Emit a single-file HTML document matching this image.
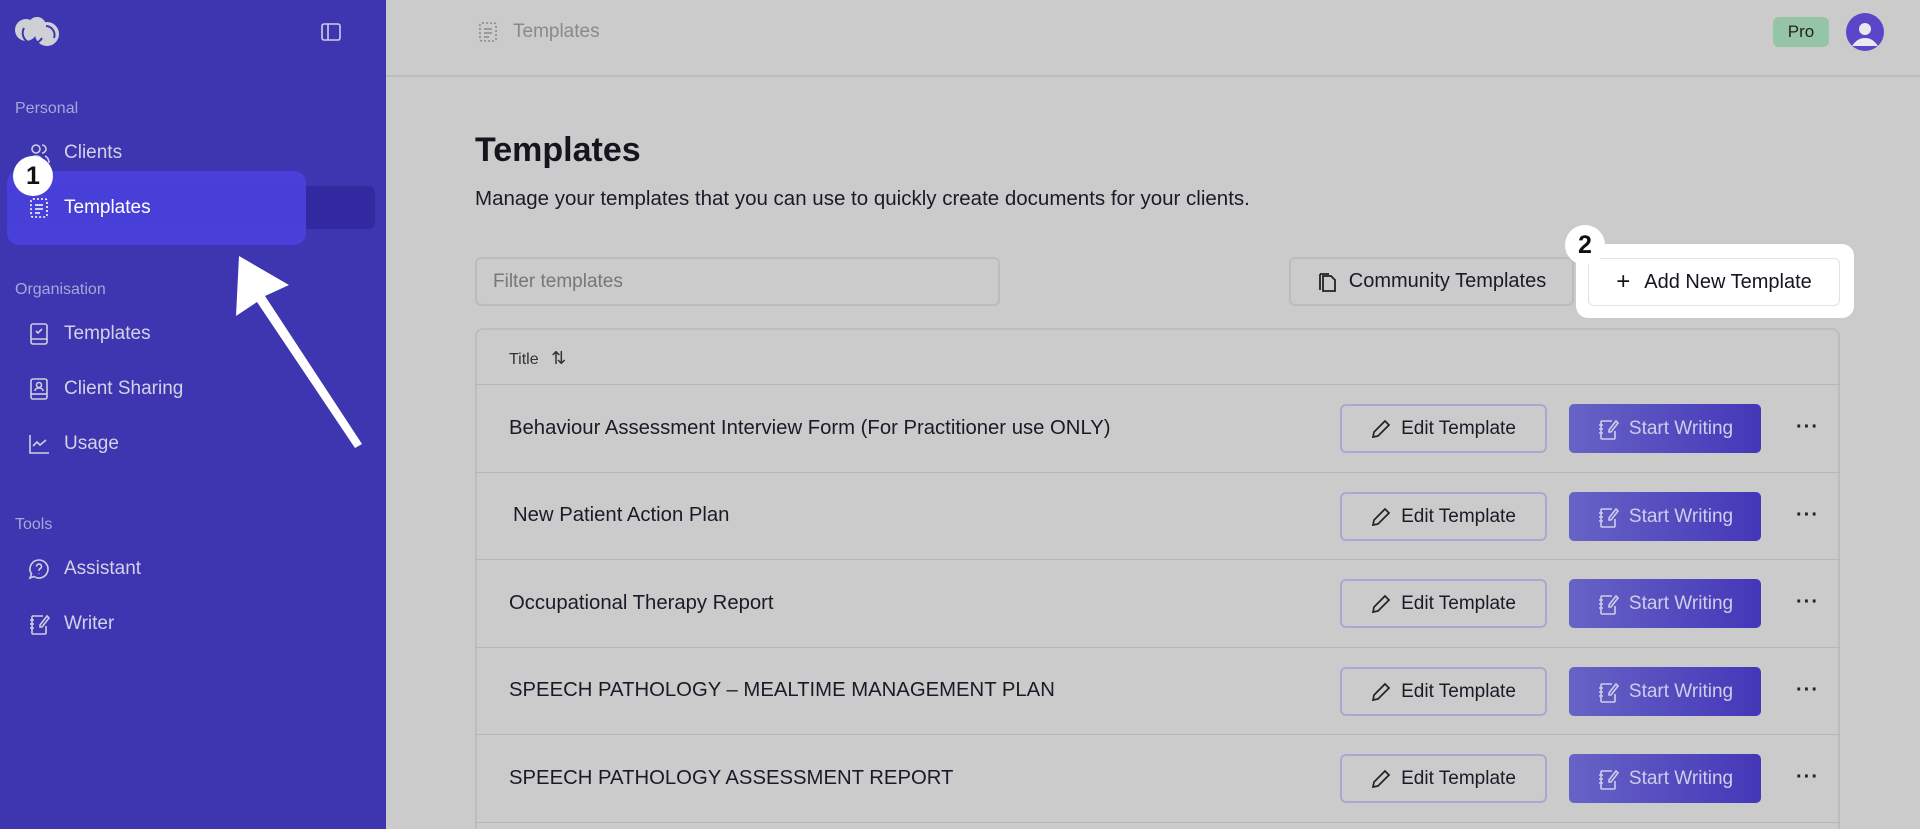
<!DOCTYPE html>
<html style="overflow:hidden;height:829px"><head><meta charset="utf-8"><style>
*{margin:0;padding:0;box-sizing:border-box}
body{width:1920px;height:829px;overflow:hidden;background:#cbcbcb;font-family:"Liberation Sans",sans-serif;position:relative}
#wrap{position:absolute;left:0;top:0;width:1920px;height:829px;overflow:hidden}
.a{position:absolute}
#sb{left:0;top:0;width:386px;height:829px;background:#3d36b0}
.sec{color:#a9a6d8;font-size:16px;left:15px}
.it{left:64px;color:#d3d2e8;font-size:19px}
.ic{left:28px;width:22px;height:22px}
.row{left:475px;width:1365px;border-top:1px solid #b5b5c0}
.rt{left:509px;font-size:20.3px;color:#1b1b28}
.eb{left:1340px;width:207px;height:49px;border:2px solid #a9a8d2;border-radius:6px;background:#cbcbcb;font-size:19px;color:#1b1b28;display:flex;align-items:center;justify-content:center;gap:10px}
.sw{left:1569px;width:192px;height:49px;border-radius:5px;background:linear-gradient(90deg,#6763c6,#4437b8);font-size:19px;color:#cfcdea;display:flex;align-items:center;justify-content:center;gap:10px}
.dt{left:1796px;font-size:20px;color:#222;letter-spacing:1px;font-weight:bold}
.bd{width:40px;height:40px;border-radius:50%;background:#fff;font-weight:bold;font-size:25px;color:#111;display:flex;align-items:center;justify-content:center}
</style></head><body><div id="wrap">
<div id="sb" class="a"></div>
<svg class="a" style="left:14px;top:16px" width="46" height="32" viewBox="0 0 46 32"><circle cx="12" cy="14" r="11" fill="#cfcfd6"/><circle cx="23" cy="10" r="9" fill="#cfcfd6"/><circle cx="33" cy="18" r="12" fill="#cfcfd6"/><path d="M10 12a10 10 0 0 0 18 10" stroke="#3d36b0" stroke-width="2" fill="none"/><path d="M32 10a9 9 0 0 1 8 12" stroke="#3d36b0" stroke-width="2" fill="none"/></svg>
<svg class="a" style="left:321px;top:23px" width="20" height="18" viewBox="0 0 20 18"><rect x="1" y="1" width="18" height="16" rx="2" fill="none" stroke="#cfcfe0" stroke-width="1.6"/><line x1="7" y1="1" x2="7" y2="17" stroke="#cfcfe0" stroke-width="1.6"/></svg>
<div class="a sec" style="top:100px">Personal</div>
<svg class="a ic" style="top:143px" viewBox="0 0 22 22" fill="none" stroke="#cfcfe0" stroke-width="1.6"><circle cx="8" cy="6" r="4"/><path d="M1 20c0-4 3-7 7-7s7 3 7 7"/><path d="M14 2a4 4 0 0 1 0 8M17 13c2 1 4 3 4 7"/></svg>
<div class="a it" style="top:142px">Clients</div>
<div class="a" style="left:7px;top:186px;width:368px;height:43px;background:#3229a0;border-radius:6px"></div>
<div class="a" style="left:7px;top:171px;width:299px;height:74px;background:#4a40dc;border-radius:12px;opacity:.95"></div>
<svg class="a ic" style="top:197px" viewBox="0 0 22 22" fill="none" stroke="#fff" stroke-width="1.6" stroke-dasharray="2 2"><rect x="3" y="2" width="16" height="18" rx="2"/><path d="M7 8h8M7 12h8M7 16h5" stroke-dasharray="none"/></svg>
<div class="a it" style="top:197px;color:#fff">Templates</div>
<div class="a bd" style="left:13px;top:156px">1</div>
<div class="a sec" style="top:281px">Organisation</div>
<svg class="a ic" style="top:323px" viewBox="0 0 22 22" fill="none" stroke="#cfcfe0" stroke-width="1.6"><rect x="3" y="1" width="16" height="20" rx="2"/><path d="M3 16h16M8 8l2 2 4-4"/></svg>
<div class="a it" style="top:323px">Templates</div>
<svg class="a ic" style="top:378px" viewBox="0 0 22 22" fill="none" stroke="#cfcfe0" stroke-width="1.6"><rect x="3" y="1" width="16" height="20" rx="2"/><path d="M3 16h16"/><circle cx="11" cy="7" r="2.5"/><path d="M7 13c0-2 2-3 4-3s4 1 4 3"/></svg>
<div class="a it" style="top:378px">Client Sharing</div>
<svg class="a ic" style="top:433px" viewBox="0 0 22 22" fill="none" stroke="#cfcfe0" stroke-width="1.6"><path d="M2 2v18h19M5 13l4-4 3 3 6-5"/></svg>
<div class="a it" style="top:433px">Usage</div>
<div class="a sec" style="top:516px">Tools</div>
<svg class="a ic" style="top:558px" viewBox="0 0 22 22" fill="none" stroke="#cfcfe0" stroke-width="1.6"><path d="M11 2a9 9 0 1 1-5 16.5L2 20l1.5-4A9 9 0 0 1 11 2z"/><path d="M8.5 8.5a2.5 2.5 0 1 1 3.5 2.3c-1 .4-1 1-1 2M11 15.5v.5"/></svg>
<div class="a it" style="top:558px">Assistant</div>
<svg class="a ic" style="top:613px" viewBox="0 0 22 22" fill="none" stroke="#cfcfe0" stroke-width="1.6"><path d="M15 3H5a1 1 0 0 0-1 1v16a1 1 0 0 0 1 1h12a1 1 0 0 0 1-1v-7M2 7h4M2 11h4M2 15h4M12 12l7-9 2 2-7 9h-2z"/></svg>
<div class="a it" style="top:613px">Writer</div>
<svg class="a" style="left:0;top:0" width="400" height="460"><polygon points="239,256 236,316 257,302 355,448 362,444 265,296 289,285" fill="#fff"/></svg>

<div class="a" style="left:386px;top:75px;width:1534px;height:2px;background:#bdbdbd"></div>
<svg class="a" style="left:477px;top:21px" width="22" height="22" viewBox="0 0 22 22" fill="none" stroke="#8a8a8a" stroke-width="1.6"><rect x="3" y="2" width="16" height="18" rx="2" stroke-dasharray="2 2"/><path d="M7 8h8M7 12h8M7 16h5"/></svg>
<div class="a" style="left:513px;top:21px;font-size:19px;color:#8a8a8a">Templates</div>
<div class="a" style="left:1773px;top:17px;width:56px;height:30px;border-radius:6px;background:#96c4a6;font-size:17px;color:#222;display:flex;align-items:center;justify-content:center">Pro</div>
<svg class="a" style="left:1846px;top:13px" width="38" height="38" viewBox="0 0 38 38"><circle cx="19" cy="19" r="19" fill="#5b45c9"/><circle cx="19" cy="16" r="6" fill="#e8e8ee"/><path d="M6 33c4-6 8-8 13-8s9 2 13 8" fill="#e8e8ee"/></svg>

<div class="a" style="left:475px;top:131px;font-size:34px;font-weight:bold;color:#15151f">Templates</div>
<div class="a" style="left:475px;top:187px;font-size:20.5px;color:#1b1b28">Manage your templates that you can use to quickly create documents for your clients.</div>
<div class="a" style="left:475px;top:257px;width:525px;height:49px;border:2px solid #bcbcbc;border-radius:6px;padding:0 16px;font-size:19px;color:#777;line-height:45px">Filter templates</div>
<div class="a" style="left:1289px;top:257px;width:285px;height:49px;border:2px solid #bcbcbc;border-radius:6px;font-size:20px;color:#1b1b28;display:flex;align-items:center;justify-content:center;gap:12px"><svg width="20" height="22" viewBox="0 0 20 22" fill="none" stroke="#222" stroke-width="1.8"><path d="M6 5h8l4 4v11H6z"/><path d="M3 3v16M3 3h9"/></svg>Community Templates</div>
<div class="a" style="left:1576px;top:244px;width:278px;height:74px;background:#fff;border-radius:12px"></div>
<div class="a" style="left:1588px;top:258px;width:252px;height:48px;border:1px solid #e2e2e2;border-radius:6px;font-size:20px;color:#15151f;display:flex;align-items:center;justify-content:center;gap:14px"><span style="font-size:24px;font-weight:300">+</span>Add New Template</div>
<div class="a bd" style="left:1565px;top:225px">2</div>

<div class="a" style="left:475px;top:328px;width:1365px;height:530px;border:2px solid #bdbdbd;border-radius:8px"></div>
<div class="a" style="left:509px;top:348px;font-size:16px;color:#333">Title <span style="margin-left:8px;font-size:18px">⇅</span></div>

<div class="a row" style="top:384px"></div>
<div class="a row" style="top:472px"></div>
<div class="a row" style="top:559px"></div>
<div class="a row" style="top:647px"></div>
<div class="a row" style="top:734px"></div>
<div class="a row" style="top:822px"></div>

<div class="a rt" style="top:417px">Behaviour Assessment Interview Form (For Practitioner use ONLY)</div>
<div class="a rt" style="top:504px;left:513px">New Patient Action Plan</div>
<div class="a rt" style="top:592px">Occupational Therapy Report</div>
<div class="a rt" style="top:679px">SPEECH PATHOLOGY – MEALTIME MANAGEMENT PLAN</div>
<div class="a rt" style="top:767px">SPEECH PATHOLOGY ASSESSMENT REPORT</div>

<div id="btns"></div>
</div>
<script>
var tops=[404,492,579,667,754],h='';
tops.forEach(function(t){
h+='<div class="a eb" style="top:'+t+'px"><svg width="20" height="20" viewBox="0 0 20 20" fill="none" stroke="#222" stroke-width="1.7"><path d="M14 2l4 4L7 17l-5 1 1-5z"/></svg>Edit Template</div>';
h+='<div class="a sw" style="top:'+t+'px"><svg width="22" height="22" viewBox="0 0 22 22" fill="none" stroke="#cfcdea" stroke-width="1.6"><path d="M15 3H5a1 1 0 0 0-1 1v16a1 1 0 0 0 1 1h12a1 1 0 0 0 1-1v-7M2 7h4M2 11h4M2 15h4M12 12l7-9 2 2-7 9h-2z"/></svg>Start Writing</div>';
h+='<div class="a dt" style="top:'+(t+12)+'px">···</div>';
});
document.getElementById('btns').innerHTML=h;
</script>
</body></html>
